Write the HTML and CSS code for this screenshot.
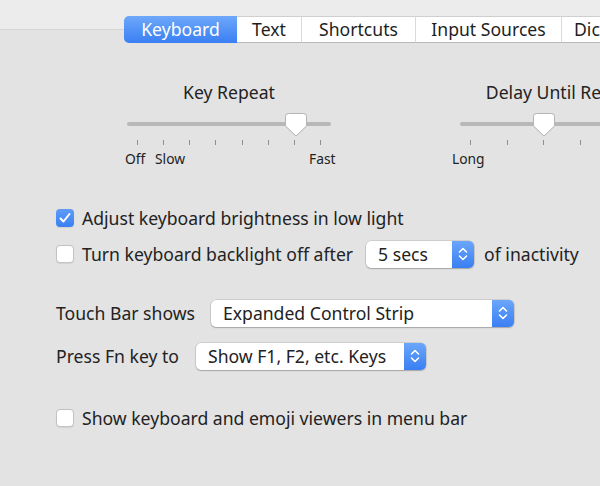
FILE: index.html
```html
<!DOCTYPE html>
<html>
<head>
<meta charset="utf-8">
<link rel="stylesheet" href="styles.css">
</head>
<body>
<div class="header">
  <div class="tabs">
    <div class="tab active">Keyboard</div>
    <div class="tab t-text">Text</div>
    <div class="tab t-short">Shortcuts</div>
    <div class="tab t-input">Input Sources</div>
    <div class="tab t-dict">Dictation</div>
  </div>
</div>

<div class="content">
  <div class="sliders">
    <div class="slider">
      <div class="slider-title">Key Repeat</div>
      <div class="track-wrap">
        <div class="track"></div>
        <svg class="thumb" style="left:158px" width="22" height="24" viewBox="0 0 22 24"><path d="M3.5 0.5 H18.5 A3 3 0 0 1 21.5 3.5 V13 L11 23 L0.5 13 V3.5 A3 3 0 0 1 3.5 0.5 Z" fill="#fff" stroke="#b4b4b4"/></svg>
      </div>
      <div class="ticks"><i></i><i></i><i></i><i></i><i></i><i></i><i></i><i></i></div>
      <div class="tick-labels">
        <span style="left:-2px">Off</span>
        <span style="left:28px">Slow</span>
        <span style="left:182px">Fast</span>
      </div>
    </div>
    <div class="slider">
      <div class="slider-title">Delay Until Repeat</div>
      <div class="track-wrap">
        <div class="track"></div>
        <svg class="thumb" style="left:73px" width="22" height="24" viewBox="0 0 22 24"><path d="M3.5 0.5 H18.5 A3 3 0 0 1 21.5 3.5 V13 L11 23 L0.5 13 V3.5 A3 3 0 0 1 3.5 0.5 Z" fill="#fff" stroke="#b4b4b4"/></svg>
      </div>
      <div class="ticks"><i></i><i></i><i></i><i></i><i></i><i></i></div>
      <div class="tick-labels">
        <span style="left:-8px">Long</span>
        <span style="left:176px">Short</span>
      </div>
    </div>
  </div>

  <div class="row row-check1">
    <span class="cb checked"><svg width="18" height="18" viewBox="0 0 18 18"><path d="M4.5 9.5 L7.5 12.5 L13.5 5" fill="none" stroke="#fff" stroke-width="2" stroke-linecap="round" stroke-linejoin="round"/></svg></span>
    <span>Adjust keyboard brightness in low light</span>
  </div>

  <div class="row row-check2">
    <span class="cb"></span>
    <span>Turn keyboard backlight off after</span>
    <div class="popup popup-secs"><span class="popup-text">5 secs</span><span class="popup-arrow"><svg width="10" height="16" viewBox="0 0 10 16"><path d="M1.5 6 L5 2.5 L8.5 6 M1.5 10 L5 13.5 L8.5 10" fill="none" stroke="#fff" stroke-width="1.6" stroke-linecap="round" stroke-linejoin="round"/></svg></span></div>
    <span class="after">of inactivity</span>
  </div>

  <div class="row row-touch">
    <span>Touch Bar shows</span>
    <div class="popup popup-touch"><span class="popup-text">Expanded Control Strip</span><span class="popup-arrow"><svg width="10" height="16" viewBox="0 0 10 16"><path d="M1.5 6 L5 2.5 L8.5 6 M1.5 10 L5 13.5 L8.5 10" fill="none" stroke="#fff" stroke-width="1.6" stroke-linecap="round" stroke-linejoin="round"/></svg></span></div>
  </div>

  <div class="row row-fn">
    <span>Press Fn key to</span>
    <div class="popup popup-fn"><span class="popup-text">Show F1, F2, etc. Keys</span><span class="popup-arrow"><svg width="10" height="16" viewBox="0 0 10 16"><path d="M1.5 6 L5 2.5 L8.5 6 M1.5 10 L5 13.5 L8.5 10" fill="none" stroke="#fff" stroke-width="1.6" stroke-linecap="round" stroke-linejoin="round"/></svg></span></div>
  </div>

  <div class="row row-check3">
    <span class="cb"></span>
    <span>Show keyboard and emoji viewers in menu bar</span>
  </div>
</div>
</body>
</html>
```

FILE: styles.css
```css
* { box-sizing: border-box; }
html, body { margin: 0; padding: 0; }
body {
  width: 600px;
  height: 486px;
  overflow: hidden;
  background: #e3e3e3;
  font-family: "Noto Sans", "Liberation Sans", Arial, sans-serif;
  font-size: 17.6px;
  color: #222;
}
.header {
  height: 30px;
  background: #ececec;
  border-bottom: 1px solid #d4d4d4;
  padding: 16px 0 0 124px;
  white-space: nowrap;
}
.tabs {
  display: flex;
  height: 27px;
  position: relative;
  z-index: 1;
}
.tab {
  flex: none;
  height: 27px;
  line-height: 25px;
  text-align: center;
  background: #fff;
  border-top: 1px solid #cfcfcf;
  border-bottom: 1px solid #b9b9b9;
  border-right: 1px solid #d9d9d9;
  color: #1e1e1e;
}
.tab.active {
  width: 113px;
  background: linear-gradient(#6ea8fa, #3a7ff3);
  border: none;
  border-radius: 5px 0 0 5px;
  color: #fff;
  line-height: 27px;
}
.tab.t-text { width: 65px; }
.tab.t-short { width: 114px; }
.tab.t-input { width: 146px; }
.tab.t-dict { padding: 0 8px 0 12px; text-align: left; }

.content {
  padding-left: 56px;
}
.sliders {
  display: flex;
  gap: 129px;
  padding-left: 71px;
  margin-top: 52px;
  white-space: nowrap;
}
.slider {
  flex: none;
  width: 204px;
  position: relative;
}
.slider-title {
  text-align: center;
  line-height: 20px;
  height: 20px;
}
.track-wrap {
  position: relative;
  height: 24px;
  margin-top: 11px;
}
.track {
  position: absolute;
  left: 0;
  right: 0;
  top: 9px;
  height: 4px;
  border-radius: 2px;
  background: #b8b8b8;
}
.thumb {
  position: absolute;
  top: 0;
  filter: drop-shadow(0 0.5px 0.5px rgba(0,0,0,0.15));
}
.ticks {
  display: flex;
  justify-content: space-between;
  padding: 0 10px;
  margin-top: 3px;
  height: 5px;
}
.ticks i {
  display: block;
  width: 1px;
  height: 5px;
  background: #8f8f8f;
}
.tick-labels {
  position: relative;
  height: 16px;
  margin-top: 6px;
  font-size: 13.8px;
  line-height: 16px;
}
.tick-labels span {
  position: absolute;
  top: 0;
}

.row {
  display: flex;
  align-items: center;
  white-space: nowrap;
}
.cb {
  flex: none;
  width: 18px;
  height: 18px;
  border-radius: 4px;
  background: #fff;
  border: 1px solid #c3c3c3;
  box-shadow: 0 0.5px 1px rgba(0,0,0,0.08);
  margin-right: 8px;
  display: flex;
}
.cb.checked {
  background: linear-gradient(#5e9cf8, #3a80f3);
  border: none;
}
.row-check1 { margin-top: 40px; height: 22px; }
.row-check2 { margin-top: 11px; height: 28px; }
.row-touch { margin-top: 31px; height: 28px; }
.row-fn { margin-top: 15px; height: 28px; }
.row-check3 { margin-top: 37px; height: 22px; }

.popup {
  display: flex;
  height: 27px;
  background: #fff;
  border-radius: 5px;
  box-shadow: 0 0 0 0.5px rgba(0,0,0,0.18), 0 1px 1.5px rgba(0,0,0,0.2);
  overflow: hidden;
}
.popup-text {
  flex: 1;
  padding-left: 12px;
  line-height: 27px;
}
.popup-arrow {
  flex: none;
  width: 22px;
  background: linear-gradient(#6aa6fa, #3a7ff3);
  display: flex;
  align-items: center;
  justify-content: center;
}
.popup-secs { width: 108px; margin-left: 13px; }
.after { margin-left: 10px; }
.popup-touch { width: 303px; margin-left: 16px; }
.popup-fn { width: 230px; margin-left: 17px; }
```
